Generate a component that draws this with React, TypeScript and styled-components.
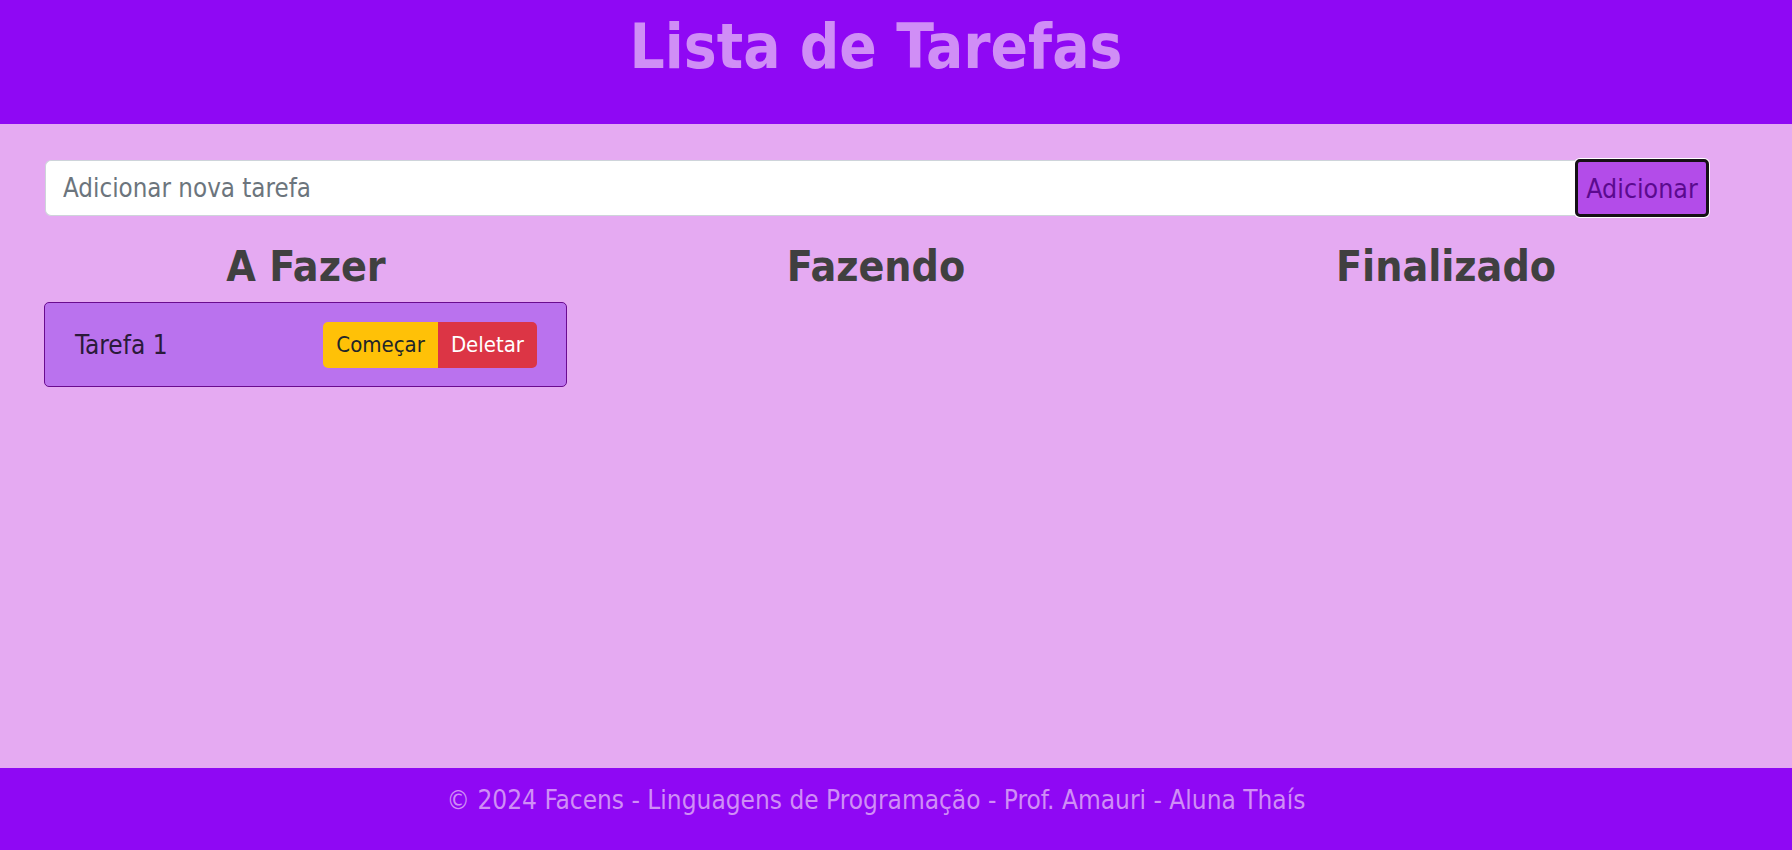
import React, { useState } from "react";
import styled, { createGlobalStyle } from "styled-components";

const GlobalStyle = createGlobalStyle`
  html, body { margin: 0; padding: 0; }
  body {
    font-family: "DejaVu Sans Condensed", "DejaVu Sans", sans-serif;
    font-stretch: condensed;
    background: #e5aaf2;
    color: #212529;
  }
  * { box-sizing: border-box; }
`;

const Page = styled.div`
  min-height: 100vh;
  display: flex;
  flex-direction: column;
`;

const Header = styled.header`
  background: #8f08f4;
  height: 124px;
  padding: 11px 40px 0 0;
  text-align: center;
`;

const Title = styled.h1`
  margin: 0;
  font-size: 61.5px;
  line-height: 1.2;
  font-weight: 700;
  color: #d08ef6;
`;

const Main = styled.main`
  flex: 1;
  padding: 35px 61px 0 21px;
`;

const Form = styled.form`
  display: flex;
  align-items: center;
  margin: 0 22px 0 24px;
`;

const Input = styled.input`
  flex: 1;
  height: 56px;
  border: 1px solid #ced4da;
  border-right: none;
  border-radius: 6px 0 0 6px;
  background: #fff;
  padding: 0 17px;
  font-family: inherit;
  font-stretch: condensed;
  font-size: 25.7px;
  color: #212529;
  outline: none;
  &::placeholder { color: #6c757d; }
`;

const AddButton = styled.button`
  height: 58px;
  width: 134px;
  border: 3px solid #151015;
  border-radius: 5px;
  box-shadow: 0 0 0 1px #ffffff;
  background: #b34ce9;
  color: #5b0a8f;
  font-family: inherit;
  font-stretch: condensed;
  font-size: 26.5px;
  padding: 0;
  cursor: pointer;
`;

const Board = styled.div`
  display: grid;
  grid-template-columns: repeat(3, 1fr);
`;

const Column = styled.section`
  display: flex;
  flex-direction: column;
  align-items: stretch;
`;

const ColumnTitle = styled.h2`
  margin: 24px 0 10px;
  text-align: center;
  font-size: 42.5px;
  line-height: 1.2;
  font-weight: 700;
  color: #404040;
`;

const Card = styled.div`
  margin: 0 24px 0 23px;
  height: 85px;
  border: 1px solid #6a0b8f;
  border-radius: 5px;
  background: #ba72ee;
  display: flex;
  align-items: center;
  justify-content: space-between;
  padding: 0 29px 0 30px;
`;

const CardText = styled.span`
  font-size: 26px;
  color: #2a1a3a;
`;

const BtnGroup = styled.div`
  display: flex;
`;

const ActionButton = styled.button<{ $variant: "warning" | "danger" }>`
  height: 46px;
  border: none;
  padding: 0 13px;
  font-family: inherit;
  font-stretch: condensed;
  font-size: 22px;
  cursor: pointer;
  background: ${(p) => (p.$variant === "warning" ? "#ffc107" : "#dc3545")};
  color: ${(p) => (p.$variant === "warning" ? "#212529" : "#ffffff")};
  border-radius: ${(p) => (p.$variant === "warning" ? "5px 0 0 5px" : "0 5px 5px 0")};
`;

const Footer = styled.footer`
  background: #8f08f4;
  height: 82px;
  padding: 13px 40px 0 0;
  text-align: center;
  font-size: 26px;
  line-height: 1.5;
  color: #d08ef6;
`;

type Task = { id: number; text: string; status: "todo" | "doing" | "done" };

export default function App() {
  const [tasks] = useState<Task[]>([{ id: 1, text: "Tarefa 1", status: "todo" }]);
  const cols: { key: Task["status"]; title: string }[] = [
    { key: "todo", title: "A Fazer" },
    { key: "doing", title: "Fazendo" },
    { key: "done", title: "Finalizado" },
  ];
  return (
    <Page>
      <GlobalStyle />
      <Header>
        <Title>Lista de Tarefas</Title>
      </Header>
      <Main>
        <Form onSubmit={(e) => e.preventDefault()}>
          <Input placeholder="Adicionar nova tarefa" />
          <AddButton type="submit">Adicionar</AddButton>
        </Form>
        <Board>
          {cols.map((c) => (
            <Column key={c.key}>
              <ColumnTitle>{c.title}</ColumnTitle>
              {tasks
                .filter((t) => t.status === c.key)
                .map((t) => (
                  <Card key={t.id}>
                    <CardText>{t.text}</CardText>
                    <BtnGroup>
                      <ActionButton $variant="warning">Começar</ActionButton>
                      <ActionButton $variant="danger">Deletar</ActionButton>
                    </BtnGroup>
                  </Card>
                ))}
            </Column>
          ))}
        </Board>
      </Main>
      <Footer>© 2024 Facens - Linguagens de Programação - Prof. Amauri - Aluna Thaís</Footer>
    </Page>
  );
}
